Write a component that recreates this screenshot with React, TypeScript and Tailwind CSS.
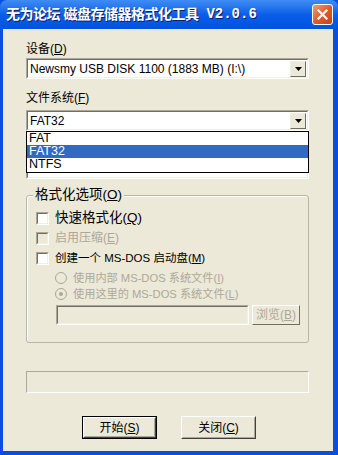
import React from 'react';

const sunken =
  'border border-t-[#aca899] border-l-[#aca899] border-b-white border-r-white';
const sunkenInner =
  'border border-t-[#716f64] border-l-[#716f64] border-b-[#f1efe2] border-r-[#f1efe2]';

const DropArrow = () => (
  <div className="w-[16px] h-[16px] bg-[#ece9d8] border border-t-[#f1efe2] border-l-[#f1efe2] border-b-[#716f64] border-r-[#716f64] flex items-center justify-center">
    <svg width="7" height="4" viewBox="0 0 7 4">
      <path d="M0 0h7L3.5 4z" fill="#000" />
    </svg>
  </div>
);

const Combo = ({ value }: { value: string }) => (
  <div className={`h-[21px] ${sunken}`}>
    <div className={`h-full bg-white flex items-center justify-between pl-[2px] pr-[1px] ${sunkenInner}`}>
      <span className="text-[12px] text-black leading-none">{value}</span>
      <DropArrow />
    </div>
  </div>
);

const CheckBox = ({ label, disabled }: { label: React.ReactNode; disabled?: boolean }) => (
  <div className="flex items-center h-[20px]">
    <div className={`w-[13px] h-[13px] ${sunken}`}>
      <div className={`w-full h-full ${disabled ? 'bg-[#ece9d8]' : 'bg-white'} ${sunkenInner}`} />
    </div>
    <span className={`ml-[6px] ${disabled ? 'text-[#aca899] text-[12px]' : 'text-black text-[13.5px]'}`}>
      {label}
    </span>
  </div>
);

const Radio = ({ label, checked }: { label: React.ReactNode; checked?: boolean }) => (
  <div className="flex items-center h-[16px]">
    <div className="w-[12px] h-[12px] rounded-full border border-[#aca899] bg-[#ece9d8] flex items-center justify-center">
      {checked && <div className="w-[4px] h-[4px] rounded-full bg-[#aca899]" />}
    </div>
    <span className="ml-[6px] text-[11.2px] text-[#aca899]">{label}</span>
  </div>
);

const Btn = ({ label, isDefault }: { label: React.ReactNode; isDefault?: boolean }) => (
  <div className={`w-[75px] h-[23px] ${isDefault ? 'border border-black' : ''}`}>
    <div className="w-full h-full border border-t-white border-l-white border-b-[#404040] border-r-[#404040] bg-[#ece9d8]">
      <div className="w-full h-full border border-transparent border-b-[#aca899] border-r-[#aca899] flex items-center justify-center text-[12px] text-black">
        {label}
      </div>
    </div>
  </div>
);

const U = ({ c }: { c: string }) => <span className="underline">{c}</span>;

export default function App() {
  return (
    <div
      className="w-[338px] h-[455px] bg-[#0a4ee0] flex flex-col overflow-hidden"
      style={{ fontFamily: '"Liberation Sans", "Noto Sans CJK SC", sans-serif' }}
    >
      {/* title bar */}
      <div className="h-[29px] shrink-0 bg-gradient-to-b from-[#3f8cf3] via-[#0a5ee8] to-[#0053e0] rounded-t-[7px] flex items-center pl-[6px] pr-[5px]">
        <span className="text-white font-bold text-[14px] tracking-[-0.5px] [text-shadow:1px_1px_0_#0a1e6a]">
          无为论坛 磁盘存储器格式化工具
        </span>
        <span
          className="ml-[8px] text-white font-bold text-[14px] [text-shadow:1px_1px_0_#0a1e6a]"
          style={{ fontFamily: '"Liberation Mono", monospace' }}
        >
          V2.0.6
        </span>
        <div className="ml-auto w-[21px] h-[21px] rounded-[3px] border border-white bg-gradient-to-br from-[#f09a7e] via-[#e05a2e] to-[#c8411a] flex items-center justify-center">
          <svg width="11" height="11" viewBox="0 0 11 11">
            <path d="M1.5 1.5l8 8M9.5 1.5l-8 8" stroke="#fff" strokeWidth="2.2" strokeLinecap="square" />
          </svg>
        </div>
      </div>

      {/* client area */}
      <div className="flex-1 ml-[3px] mr-[5px] mb-[4px] bg-[#ece9d8] pl-[23px] pr-[24px] pt-[12px] flex flex-col">
        <div className="text-[12px] text-black h-[16px] leading-[16px]">
          设备(<U c="D" />)
        </div>
        <div className="mt-[1px]">
          <Combo value="Newsmy USB DISK 1100 (1883 MB) (I:\)" />
        </div>

        <div className="mt-[11px] text-[12px] text-black h-[16px] leading-[16px]">
          文件系统(<U c="F" />)
        </div>
        <div className="mt-[4px] relative">
          <Combo value="FAT32" />
          {/* hidden field behind the open list */}
          <div className={`mt-[27px] h-[21px] ${sunken}`}>
            <div className={`h-full bg-white ${sunkenInner}`} />
          </div>
          {/* open dropdown list */}
          <div className="absolute left-0 right-0 top-[21px] h-[42px] bg-white border border-black text-[12.5px] leading-[13px]">
            <div className="h-[13px] pl-[2px] text-black">FAT</div>
            <div className="h-[13px] pl-[2px] bg-[#316ac5] text-white">FAT32</div>
            <div className="h-[13px] pl-[2px] text-black">NTFS</div>
          </div>
        </div>

        {/* group box */}
        <div className="mt-[16px] relative border border-[#b9b6a5] shadow-[inset_1px_1px_0_#fff] rounded-[3px] h-[148px] pt-[12px] pl-[9px]">
          <div className="absolute -top-[9px] left-[6px] bg-[#ece9d8] px-[2px] text-[13.5px] text-black leading-[16px]">
            格式化选项(<U c="O" />)
          </div>
          <CheckBox label={<>快速格式化(<U c="Q" />)</>} />
          <CheckBox disabled label={<>启用压缩(<U c="E" />)</>} />
          <CheckBox label={<span className="text-[11.5px]">创建一个 MS-DOS 启动盘(<U c="M" />)</span>} />
          <div className="pl-[19px] mt-[2px]">
            <Radio label={<>使用内部 MS-DOS 系统文件(<U c="I" />)</>} />
            <Radio checked label={<>使用这里的 MS-DOS 系统文件(<U c="L" />)</>} />
            <div className="flex items-center mt-[3px] pl-[1px]">
              <div className={`w-[193px] h-[20px] ${sunken}`}>
                <div className={`h-full bg-[#ece9d8] ${sunkenInner}`} />
              </div>
              <div className="ml-[3px] w-[48px] h-[20px] border border-t-white border-l-white border-b-[#716f64] border-r-[#716f64] flex items-center justify-center text-[12px] text-[#aca899]">
                浏览(<U c="B" />)
              </div>
            </div>
          </div>
        </div>

        {/* progress */}
        <div className="mt-[28px] h-[22px] border border-t-[#aca899] border-l-[#aca899] border-b-white border-r-white" />

        {/* buttons */}
        <div className="mt-[23px] flex pl-[56px] gap-[24px]">
          <Btn isDefault label={<>开始(<U c="S" />)</>} />
          <Btn label={<>关闭(<U c="C" />)</>} />
        </div>
      </div>
    </div>
  );
}
